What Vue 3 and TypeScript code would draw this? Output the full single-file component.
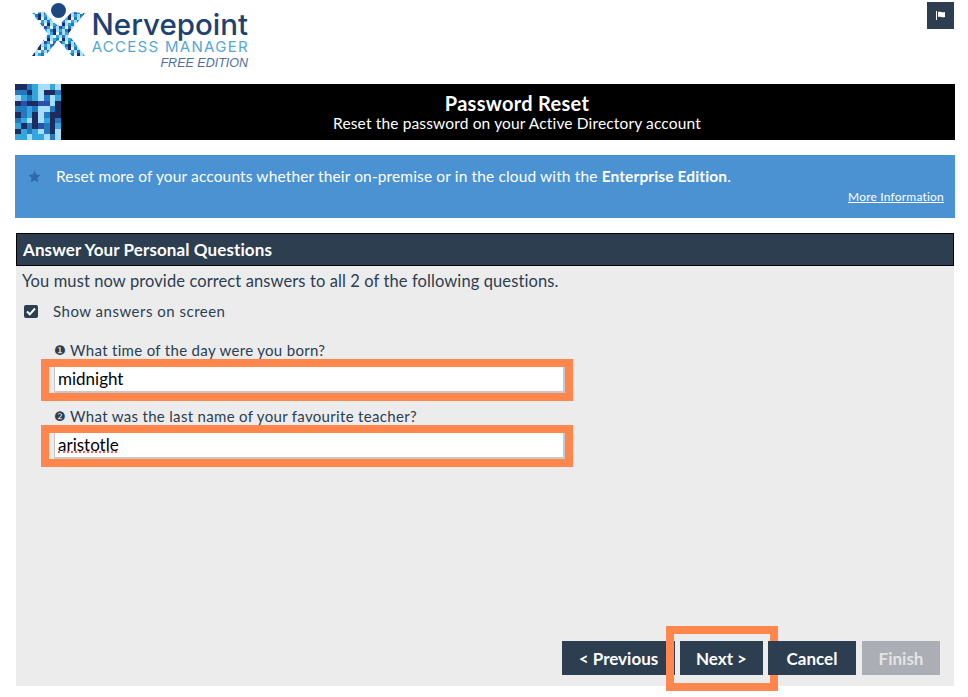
<template>
  <div class="page">
    <header class="top">
      <div class="logo">
        <svg class="logo-mark" width="56" height="58" viewBox="0 0 56 58">
          <defs>
            <pattern id="tiles" width="15" height="15" patternUnits="userSpaceOnUse">
              <rect
                v-for="tile in logoTiles"
                :key="tile.id"
                :x="tile.x"
                :y="tile.y"
                width="3"
                height="3"
                :fill="tile.color"
              />
            </pattern>
          </defs>
          <path d="M0 11 L12 10 L26 24 L40 10 L53 11 L36 32 L53 54 L40 54 L26 38 L13 54 L0 54 L16 32 Z" fill="url(#tiles)" />
          <circle cx="26.500" cy="8.500" r="7.500" fill="#1c4a80" />
        </svg>
        <div class="logo-text">
          <span class="logo-name">Nervepoint</span>
          <span class="logo-product">ACCESS MANAGER</span>
          <span class="logo-edition">FREE EDITION</span>
        </div>
      </div>
      <button class="flag-btn" aria-label="Language">
        <svg width="10" height="9" viewBox="0 0 10 9">
          <rect x="0" y="0" width="1" height="9" fill="#fff" />
          <path d="M2 1 C4 0 6 2 9 1 V6 C6 7 4 5 2 6 Z" fill="#fff" />
        </svg>
      </button>
    </header>

    <section class="banner">
      <div class="mosaic">
        <i
          v-for="cell in mosaicCells"
          :key="cell.id"
          :style="{ background: cell.color }"
        ></i>
      </div>
      <div class="banner-text">
        <strong>Password Reset</strong>
        <span>Reset the password on your Active Directory account</span>
      </div>
    </section>

    <section class="notice">
      <div class="notice-line">
        <svg class="star" width="13" height="13" viewBox="0 0 24 24">
          <path d="M12 1l3.400 7.200 7.600 1-5.600 5.400 1.400 7.900L12 18.700l-6.800 3.800 1.400-7.900L1 9.200l7.600-1z" fill="#2f6bab" />
        </svg>
        <p>Reset more of your accounts whether their on-premise or in the cloud with the <b>Enterprise Edition</b>.</p>
      </div>
      <a class="more" href="#">More Information</a>
    </section>

    <section class="panel">
      <h2>Answer Your Personal Questions</h2>
      <p class="intro">You must now provide correct answers to all 2 of the following questions.</p>
      <label class="show">
        <span class="check">
          <svg width="10" height="9" viewBox="0 0 10 9">
            <path d="M1 4.500 L3.800 7.300 L9 1.500" fill="none" stroke="#fff" stroke-width="2" />
          </svg>
        </span>
        Show answers on screen
      </label>

      <div class="questions">
        <div v-for="q in questions" :key="q.mark" class="question">
          <label><span class="mark">{{ q.mark }}</span>{{ q.text }}</label>
          <div class="highlight">
            <input type="text" :value="q.answer" />
            <span v-if="q.misspelt" class="squiggle"></span>
          </div>
        </div>
      </div>

      <div class="actions">
        <button class="btn prev">&lt; Previous</button>
        <button class="btn next">Next &gt;<span class="next-ring"></span></button>
        <button class="btn cancel">Cancel</button>
        <button class="btn finish" disabled>Finish</button>
      </div>
    </section>
  </div>
</template>

<script setup lang="ts">
interface Question {
  mark: string;
  text: string;
  answer: string;
  misspelt: boolean;
}

const questions: Question[] = [
  { mark: "❶", text: "What time of the day were you born?", answer: "midnight", misspelt: false },
  { mark: "❷", text: "What was the last name of your favourite teacher?", answer: "aristotle", misspelt: true },
];

const palette: Record<string, string> = {
  d: "#1d2b5e",
  b: "#2379bd",
  c: "#34a6de",
  l: "#a6def9",
  r: "#2a50ae",
  w: "#e6f5fd",
};

const mosaicRows = [
  "ddbcllcl",
  "bbdclddb",
  "lcbclblc",
  "drddrrld",
  "bbcbllbd",
  "dbcdlbdd",
  "bcldlcdb",
  "cdbdrbdc",
  "dcbclbdl",
  "cclcclbl",
];

const mosaicCells = mosaicRows.flatMap((row, y) =>
  row.split("").map((key, x) => ({ id: `${x}-${y}`, color: palette[key] })),
);

const logoRows = ["lcdwb", "blwcl", "dlcbw", "cwblr", "lbdlc"];

const logoTiles = logoRows.flatMap((row, y) =>
  row.split("").map((key, x) => ({ id: `${x}-${y}`, x: x * 3, y: y * 3, color: palette[key] })),
);
</script>

<style scoped>
.page {
  width: 968px;
  height: 697px;
  padding: 0 13px 11px 15px;
  box-sizing: border-box;
  display: flex;
  flex-direction: column;
  font-family: Lato, "Liberation Sans", sans-serif;
  color: #2c3e50;
  background: #fff;
  overflow: hidden;
}

.top {
  height: 84px;
  flex: none;
  display: flex;
  justify-content: space-between;
  align-items: flex-start;
}

.logo {
  display: flex;
  margin-left: 17px;
  padding-top: 2px;
}

.logo-mark {
  flex: none;
}

.logo-text {
  display: flex;
  flex-direction: column;
  align-items: flex-end;
  width: 157px;
  margin-left: 3px;
  padding-top: 7px;
  font-family: Inter, "Liberation Sans", sans-serif;
  white-space: nowrap;
}

.logo-name {
  font-size: 29.500px;
  line-height: 30px;
  font-weight: 500;
  color: #1d4270;
}

.logo-product {
  font-size: 15px;
  line-height: 15px;
  font-weight: 400;
  color: #55a7d8;
  letter-spacing: 1.3px;
  margin-right: -1px;
}

.logo-edition {
  margin-top: 1px;
  font-family: "Liberation Sans", sans-serif;
  font-size: 12.500px;
  line-height: 17px;
  font-style: italic;
  color: #4f6f98;
}

.flag-btn {
  width: 27px;
  height: 27px;
  margin-top: 2px;
  margin-right: 1px;
  padding: 0;
  border: none;
  background: #2c3e50;
  display: flex;
  align-items: center;
  justify-content: center;
}

.banner {
  height: 56px;
  flex: none;
  display: flex;
  background: #000;
}

.mosaic {
  width: 46px;
  height: 56px;
  flex: none;
  display: grid;
  grid-template-columns: repeat(8, 1fr);
  grid-template-rows: repeat(10, 1fr);
}

.banner-text {
  flex: 1;
  display: flex;
  flex-direction: column;
  align-items: center;
  padding: 9px 0 0 18px;
  color: #fff;
}

.banner-text strong {
  font-size: 20px;
  line-height: 21px;
  font-weight: 700;
  letter-spacing: 0.3px;
}

.banner-text span {
  font-size: 15.500px;
  line-height: 18px;
  letter-spacing: 0.15px;
}

.notice {
  height: 63px;
  flex: none;
  margin-top: 15px;
  padding: 11px 11px 0 13px;
  box-sizing: border-box;
  background: #4b92d3;
  color: #fff;
  display: flex;
  flex-direction: column;
}

.notice-line {
  display: flex;
  align-items: center;
}

.star {
  flex: none;
}

.notice-line p {
  margin: 0 0 0 15px;
  font-size: 15.500px;
  line-height: 20px;
  letter-spacing: 0.13px;
}

.more {
  align-self: flex-end;
  margin-top: 3px;
  font-size: 12px;
  line-height: 16px;
  color: #fff;
  letter-spacing: 0.2px;
}

.panel {
  flex: 1;
  margin: 15px 1px 0;
  background: #ececec;
  display: flex;
  flex-direction: column;
}

.panel h2 {
  margin: 0;
  height: 33px;
  padding-left: 6px;
  box-sizing: border-box;
  border: 1px solid #000;
  background: #2c3e50;
  color: #fff;
  font-size: 17px;
  font-weight: 700;
  letter-spacing: 0.1px;
  line-height: 31px;
}

.intro {
  margin: 4px 0 0 6px;
  font-size: 16.500px;
  line-height: 22px;
  letter-spacing: 0.1px;
}

.show {
  display: flex;
  align-items: center;
  margin: 9px 0 0 8px;
  font-size: 15px;
  line-height: 20px;
  letter-spacing: 0.5px;
}

.check {
  width: 14px;
  height: 13px;
  margin-right: 15px;
  border-radius: 2px;
  background: #2c3e50;
  display: flex;
  align-items: center;
  justify-content: center;
}

.questions {
  margin: 20px 0 0 25px;
  width: 532px;
  display: flex;
  flex-direction: column;
  gap: 6px;
}

.question label {
  display: flex;
  align-items: center;
  height: 18px;
  margin-left: 13px;
  font-size: 15px;
  line-height: 18px;
  letter-spacing: 0.32px;
}

.mark {
  width: 16px;
  flex: none;
  margin-top: 2px;
  font-family: "DejaVu Sans", sans-serif;
  font-size: 13px;
  line-height: 18px;
  letter-spacing: 0;
}

.highlight {
  position: relative;
  border: 8px solid #ff874d;
  height: 42px;
  box-sizing: border-box;
  padding-left: 5px;
}

.highlight input {
  display: block;
  width: 100%;
  height: 26px;
  box-sizing: border-box;
  padding: 0 3px 2px;
  border: none;
  border-left: 1px solid #c8c8c8;
  border-bottom: 2px solid #c8c8c8;
  border-right: 2px solid #c8c8c8;
  background: #fff;
  outline: none;
  font-family: Lato, "Liberation Sans", sans-serif;
  font-size: 17px;
  color: #000;
}

.squiggle {
  position: absolute;
  left: 9px;
  top: 18px;
  width: 59px;
  border-bottom: 2px dotted #e8636b;
}

.actions {
  margin-top: auto;
  padding: 0 14px 11px 0;
  display: flex;
  justify-content: flex-end;
  gap: 5px;
}

.btn {
  position: relative;
  height: 34px;
  padding: 0;
  border: none;
  background: #2c3e50;
  color: #fff;
  font-family: Lato, "Liberation Sans", sans-serif;
  font-size: 17px;
  font-weight: 700;
}

.prev {
  width: 113px;
}

.next {
  width: 83px;
}

.cancel {
  width: 88px;
}

.finish {
  width: 78px;
  margin-left: 1px;
  background: #abaeb4;
  color: #e4e4e6;
}

.next-ring {
  position: absolute;
  left: -14px;
  top: -15px;
  width: 112px;
  height: 65px;
  box-sizing: border-box;
  border: 8px solid #ff874d;
}
</style>

<style>
body {
  margin: 0;
}
</style>
